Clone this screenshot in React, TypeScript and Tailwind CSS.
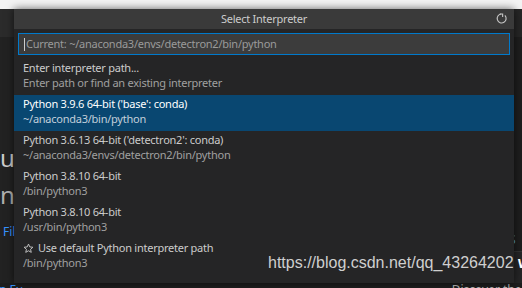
import { useMemo } from "react";

type Item = {
  label: string;
  detail: string;
  star?: boolean;
};

const items: Item[] = [
  { label: "Enter interpreter path...", detail: "Enter path or find an existing interpreter" },
  { label: "Python 3.9.6 64-bit ('base': conda)", detail: "~/anaconda3/bin/python" },
  { label: "Python 3.6.13 64-bit ('detectron2': conda)", detail: "~/anaconda3/envs/detectron2/bin/python" },
  { label: "Python 3.8.10 64-bit", detail: "/bin/python3" },
  { label: "Python 3.8.10 64-bit", detail: "/usr/bin/python3" },
  { label: "Use default Python interpreter path", detail: "/bin/python3", star: true },
];

function RefreshIcon() {
  return (
    <svg width="13" height="13" viewBox="0 0 16 16" fill="none" stroke="#c5c5c5" strokeWidth="1.4">
      <path d="M12.2 4.2A5.5 5.5 0 1 1 7.6 2.5" />
      <path d="M5.8 2.4h3.6V6" strokeLinejoin="miter" />
    </svg>
  );
}

function StarIcon() {
  return (
    <svg width="11" height="11" viewBox="0 0 16 16" fill="none" stroke="#cccccc" strokeWidth="1.3">
      <path d="M8 1.6l1.9 4.1 4.5.5-3.4 3 1 4.4L8 11.3l-4 2.3 1-4.4-3.4-3 4.5-.5z" strokeLinejoin="round" />
    </svg>
  );
}

export default function App() {
  const selected = useMemo(() => 1, []);

  return (
    <div className="relative h-[288px] w-[522px] overflow-hidden bg-[#1e1e1e] font-['Noto_Sans',sans-serif]">
      {/* editor behind the quick pick */}
      <div className="flex h-full flex-col">
        <div className="h-[9px] shrink-0 bg-[#f3f3f3]" />
        <div className="flex h-[274px] shrink-0">
          <div className="flex w-[40px] flex-col bg-[#222222]">
            <div className="h-[28px] bg-[#2b2b2b]" />
            <p className="mt-[107px] text-[24px] leading-[28px] text-[#cccccc]">u</p>
            <p className="mt-[9px] text-[24px] leading-[28px] text-[#b0b0b0]">n</p>
            <p className="ml-[3px] mt-[16px] text-[12px] leading-[14px] text-[#3794ff]">File</p>
          </div>
          <div className="flex-1 bg-[#222222]" />
          <div className="flex w-[14px] flex-col bg-[#1e1e1e]">
            <div className="h-[28px] bg-[#262626]" />
            <p className="ml-[1px] mt-[196px] text-[12px] leading-[14px] text-[#569cd6]">S</p>
            <div className="mt-[4px] flex-1 border-t border-[#333333] bg-[#252526]" />
          </div>
        </div>
        <div className="flex flex-1 justify-between">
          <p className="ml-[-1px] text-[12px] leading-[14px] text-[#3794ff]">n Fu</p>
          <p className="mr-[-10px] whitespace-nowrap text-[12px] leading-[14px] text-[#bbbbbb]">Discover the b</p>
        </div>
      </div>

      {/* quick pick overlay */}
      <div className="absolute left-[14px] top-[9px] flex h-[274px] w-[500px] flex-col bg-[#252526] tracking-[-0.25px] shadow-[0_0_8px_rgba(0,0,0,0.6)]">
        <div className="relative flex h-[20px] items-center justify-center bg-[#3a3a3a] text-[11px] text-[#cccccc]">
          Select Interpreter
          <div className="absolute right-[6px] top-[3px]">
            <RefreshIcon />
          </div>
        </div>
        <div className="mx-[4px] mt-[4px] flex h-[22px] items-center border border-[#007acc] bg-[#3c3c3c] pl-[5px] text-[11px] text-[#9a9a9a]">
          <span className="mr-[1px] h-[13px] w-px bg-[#cccccc]" />
          Current: ~/anaconda3/envs/detectron2/bin/python
        </div>
        <div className="mt-[4px] flex flex-col">
          {items.map((item, i) => (
            <div
              key={i}
              className={`flex h-[36px] flex-col pl-[9px] pt-[2px] ${i === selected ? "bg-[#094771]" : ""}`}
            >
              <div
                className={`flex h-[15px] items-center gap-[4px] text-[11px] ${i === selected ? "text-[#ffffff]" : "text-[#cccccc]"}`}
              >
                {item.star && <StarIcon />}
                {item.label}
              </div>
              <div
                className={`flex h-[14px] items-center text-[11px] ${i === selected ? "text-[#c2cfdb]" : "text-[#a0a0a0]"}`}
              >
                {item.detail}
              </div>
            </div>
          ))}
        </div>
      </div>

      {/* watermark */}
      <p className="absolute left-[268px] top-[253px] whitespace-nowrap font-['Liberation_Sans',sans-serif] text-[16px] leading-[20px] text-[#cfcfcf]">
        https://blog.csdn.net/qq_43264202 <span className="font-bold text-white">w</span>
      </p>
    </div>
  );
}
